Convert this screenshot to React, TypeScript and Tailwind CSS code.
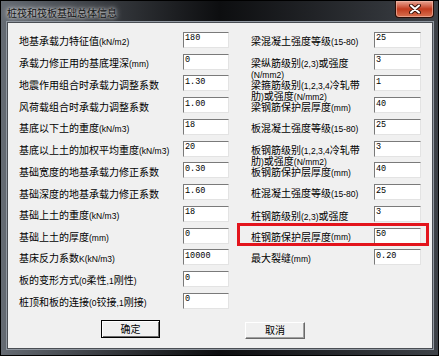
import React from "react"

type Row = { label: string | string[]; value: string; nudge?: boolean; cover?: boolean }

const leftRows: Row[] = [
  { label: "地基承载力特征值(kN/m2)", value: "180" },
  { label: "承载力修正用的基底埋深(mm)", value: "0" },
  { label: "地震作用组合时承载力调整系数", value: "1.30" },
  { label: "风荷载组合时承载力调整系数", value: "1.00" },
  { label: "基底以下土的重度(kN/m3)", value: "18" },
  { label: "基底以上土的加权平均重度(kN/m3)", value: "20" },
  { label: "基础宽度的地基承载力修正系数", value: "0.30" },
  { label: "基础深度的地基承载力修正系数", value: "1.60" },
  { label: "基础上土的重度(kN/m3)", value: "18" },
  { label: "基础上土的厚度(mm)", value: "0" },
  { label: "基床反力系数K(kN/m3)", value: "10000" },
  { label: "板的变形方式(0柔性,1刚性)", value: "0" },
  { label: "桩顶和板的连接(0铰接,1刚接)", value: "0" },
]

const rightRows: Row[] = [
  { label: "梁混凝土强度等级(15-80)", value: "25" },
  { label: ["梁纵筋级别(2,3)或强度", "(N/mm2)"], value: "3" },
  { label: ["梁箍筋级别(1,2,3,4冷轧带", "肋)或强度(N/mm2)"], value: "1" },
  { label: "梁钢筋保护层厚度(mm)", value: "40", nudge: true },
  { label: "板混凝土强度等级(15-80)", value: "25" },
  { label: ["板钢筋级别(1,2,3,4冷轧带", "肋)或强度(N/mm2)"], value: "3" },
  { label: "板钢筋保护层厚度(mm)", value: "40", nudge: true },
  { label: "桩混凝土强度等级(15-80)", value: "25" },
  { label: ["桩钢筋级别(2,3)或强度", "(N/mm2)"], value: "3" },
  { label: "桩钢筋保护层厚度(mm)", value: "50", cover: true },
  { label: "最大裂缝(mm)", value: "0.20" },
]

// ascii runs are drawn in a smaller face, like the half-width dialog font
const Mixed = ({ text }: { text: string }) => (
  <>
    {text.split(/([\x00-\x7f]+)/).map((part, i) =>
      i % 2 ? (
        <span key={i} className="text-[8.5px] [font-family:'Liberation_Sans',sans-serif]">
          {part}
        </span>
      ) : (
        <span key={i}>{part}</span>
      )
    )}
  </>
)

const Field = ({ value, w }: { value: string; w: string }) => (
  <input
    readOnly
    value={value}
    className={`${w} h-[16px] shrink-0 bg-white border border-t-[#7a7a7a] border-l-[#7a7a7a] border-r-[#e3e3e3] border-b-[#e3e3e3] pl-[1px] text-[8.5px] leading-[10px] text-black outline-none self-center [font-family:'Liberation_Mono',monospace]`}
    style={{ paddingBottom: 3 }}
  />
)

const FormRow = ({ row, labelW, inputW }: { row: Row; labelW: string; inputW: string }) => {
  const two = Array.isArray(row.label)
  let label
  if (two) {
    label = (
      <div className={`${labelW} shrink-0 pt-[7.5px] leading-[9px] whitespace-nowrap`}>
        {(row.label as string[]).map((l, i) => (
          <div key={i}>
            <Mixed text={l} />
          </div>
        ))}
      </div>
    )
  } else if (row.cover) {
    label = (
      <div className={`${labelW} shrink-0 relative mt-[1px] bg-[#f0f0f0] flex items-center whitespace-nowrap leading-[12px] pt-[2px]`}>
        <Mixed text={row.label as string} />
      </div>
    )
  } else {
    label = (
      <div
        className={`${labelW} shrink-0 self-center whitespace-nowrap leading-[12px] ${
          row.nudge ? "pt-[5px]" : "pt-[3px]"
        }`}
      >
        <Mixed text={row.label as string} />
      </div>
    )
  }
  return (
    <div className="flex h-[21.75px]">
      {label}
      <Field value={row.value} w={inputW} />
    </div>
  )
}

const CloseGlyph = () => (
  <svg width="12" height="10" viewBox="0 0 12 10">
    <path d="M2 1.5 L10 8.5 M10 1.5 L2 8.5" stroke="#3a1208" strokeWidth="4" strokeLinecap="round" />
    <path d="M2 1.5 L10 8.5 M10 1.5 L2 8.5" stroke="#fff" strokeWidth="2" strokeLinecap="round" />
  </svg>
)

export default function App() {
  return (
    <div className="relative w-[439px] h-[356px] flex flex-col border border-black bg-gradient-to-r from-[#656b73] via-[#0d0e10] to-[#3e4248] text-[10px] text-black [font-family:'Noto_Sans_CJK_SC','Liberation_Sans',sans-serif]">
      {/* title bar */}
      <div className="h-[21px] flex items-start">
        <span className="ml-[6px] mt-[5px] text-[10px] leading-[13px] text-[#141414] [text-shadow:0_0_6px_#ffffff,0_0_3px_#ffffffaa]">
          桩筏和筏板基础总体信息
        </span>
        <button className="ml-auto mr-[4px] w-[39px] h-[17px] flex items-center justify-center rounded-b-[4px] border border-t-0 border-[#2a0d06] bg-gradient-to-b from-[#e8a392] via-[#c23a1d] to-[#d9704f] shadow-[inset_0_0_0_1px_#f0b8a8aa]">
          <CloseGlyph />
        </button>
      </div>

      {/* client area */}
      <div className="flex-1 ml-[6px] mr-[5px] mb-[6px] bg-[#f0f0f0] border border-[#4a4e54] shadow-[0_0_0_1px_#9097a0] flex flex-col">
        <div className="flex pt-[6px] pl-[11px]">
          <div className="flex flex-col">
            {leftRows.map((r, i) => (
              <FormRow key={i} row={r} labelW="w-[164px]" inputW="w-[46px]" />
            ))}
          </div>
          <div className="flex flex-col ml-[22px]">
            {rightRows.map((r, i) => (
              <FormRow key={i} row={r} labelW="w-[123px]" inputW="w-[47px]" />
            ))}
          </div>
        </div>

        <div className="flex items-start mt-[8px] ml-[93px]">
          <button className="w-[59px] h-[18px] border border-black bg-[#f0f0f0] shadow-[inset_1px_1px_0_#ffffff,inset_-1px_-1px_0_#696969] text-[10px] leading-[12px]">
            确定
          </button>
          <button className="ml-[85px] mt-[2px] w-[60px] h-[17px] border border-t-white border-l-white border-r-[#696969] border-b-[#696969] bg-[#f0f0f0] shadow-[inset_-1px_-1px_0_#a0a0a0] text-[10px] leading-[12px]">
            取消
          </button>
        </div>
      </div>

      {/* red annotation box */}
      <div className="absolute left-[236px] top-[222px] w-[192px] h-[23px] border-[3px] border-[#e3141c] pointer-events-none" />
    </div>
  )
}
